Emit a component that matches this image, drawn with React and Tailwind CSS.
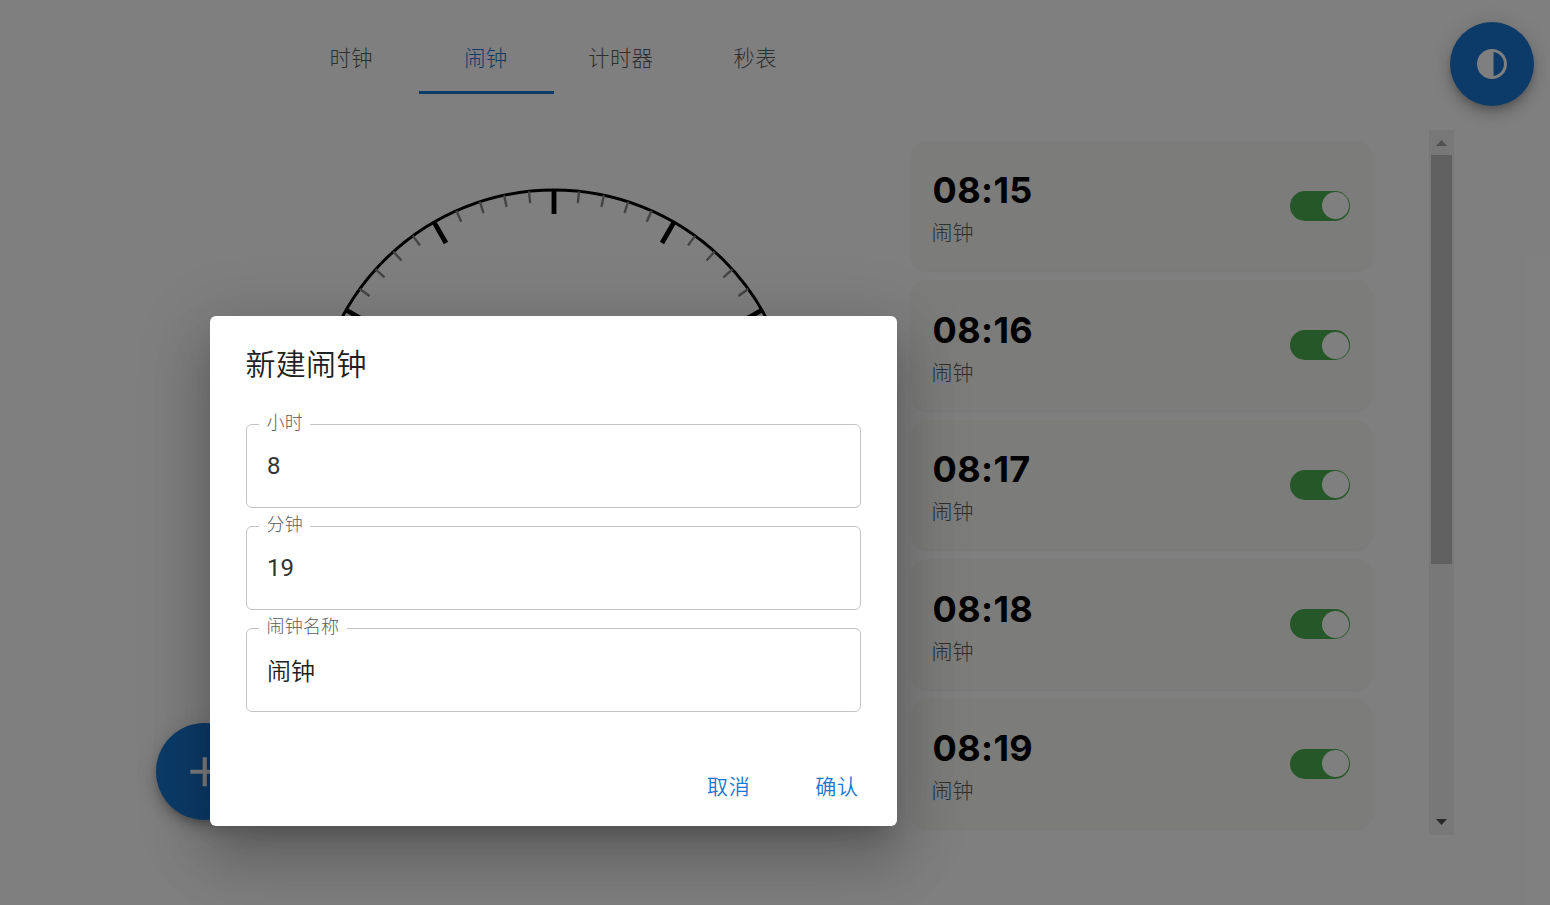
const TABS = ['时钟', '闹钟', '计时器', '秒表'];
const ALARMS = ['08:15', '08:16', '08:17', '08:18', '08:19'];

function Tabs() {
  return (
    <nav className="flex h-[94px] w-[540px] pt-[22px]">
      {TABS.map((t) => (
        <div
          key={t}
          className={
            t === '闹钟'
              ? 'flex w-[135px] items-center justify-center border-b-3 border-[#1976d2] pt-[4px] text-[21.3px] tracking-[0.4px] text-[#1976d2]'
              : 'flex w-[134.5px] items-center justify-center border-b-3 border-transparent pt-[4px] text-[21.3px] tracking-[0.4px] text-[#5c5c5c]'
          }
        >
          {t}
        </div>
      ))}
    </nav>
  );
}

function ClockFace() {
  const ticks = Array.from({ length: 60 }, (_, i) => i);
  return (
    <svg className="size-[486px]" viewBox="-243 -243 486 486">
      <circle r="240" fill="none" stroke="#000" strokeWidth="3" />
      {ticks.map((i) => (
        <line
          key={i}
          x1="0"
          x2="0"
          y1="-240"
          y2={i % 5 ? -228 : -216}
          stroke={i % 5 ? '#888' : '#000'}
          strokeWidth={i % 5 ? 2.4 : 4.8}
          transform={`rotate(${i * 6})`}
        />
      ))}
    </svg>
  );
}

function AlarmCard({ time }) {
  return (
    <div className="flex h-[129.5px] w-[463px] shrink-0 items-center justify-between rounded-[18px] bg-[#f9f9f4] pr-[23px] pl-[22px] shadow-[0_1.5px_3px_rgba(0,0,0,0.05)]">
      <div className="flex flex-col pt-[7px]">
        <span className="pl-px font-[Inter,sans-serif] text-[36px] leading-[44px] font-bold tracking-[0.4px] text-black">{time}</span>
        <span className="mt-[6px] text-[21px] leading-[31px] text-[#5c5c5c]">闹钟</span>
      </div>
      <div className="mt-px flex h-[30px] w-[60px] items-center justify-end rounded-full bg-[#4caf50] pr-px">
        <div className="size-[27px] rounded-full bg-white" />
      </div>
    </div>
  );
}

function Scrollbar() {
  return (
    <div className="flex h-[705px] w-[25px] flex-col items-center bg-[#f1f1f1]">
      <svg className="h-[25px] w-[25px] shrink-0" viewBox="0 0 25 25">
        <path d="M7 16h11l-5.5-6z" fill="#a3a3a3" />
      </svg>
      <div className="h-[409px] w-[21px] bg-[#c1c1c1]" />
      <svg className="mt-auto h-[25px] w-[25px] shrink-0" viewBox="0 0 25 25">
        <path d="M7 9h11l-5.5 6z" fill="#505050" />
      </svg>
    </div>
  );
}

const FAB_SHADOW =
  'shadow-[0_4.5px_7.5px_-1.5px_rgba(0,0,0,0.2),0_9px_15px_rgba(0,0,0,0.14),0_1.5px_27px_rgba(0,0,0,0.12)]';

function Field({ label, value, className }) {
  return (
    <fieldset className="h-[92px] w-[615px] rounded-[6px] border border-[#c4c4c4] pl-3">
      <legend className="h-[16px] px-[7.5px] text-[18px] leading-[14px] tracking-[0.2px] text-[#5c5c5c]">{label}</legend>
      <div className={`flex h-[67px] items-center pl-2 text-[24px] ${className}`}>{value}</div>
    </fieldset>
  );
}

function Dialog() {
  return (
    <div className="flex h-[510px] w-[687px] flex-col rounded-[6px] bg-white px-[36px] shadow-[0_16.5px_22.5px_-10.5px_rgba(0,0,0,0.2),0_36px_57px_4.5px_rgba(0,0,0,0.14),0_13.5px_69px_12px_rgba(0,0,0,0.12)]">
      <h2 className="-ml-[0.5px] pt-[25px] text-[30px] leading-[48px] font-[350] tracking-[0.3px] text-[#212121]">新建闹钟</h2>
      <div className="mt-[27px] flex flex-col gap-[10px]">
        <Field label="小时" value="8" className="font-normal text-[#333333]" />
        <Field label="分钟" value="19" className="font-normal text-[#333333]" />
        <Field label="闹钟名称" value="闹钟" className="pt-[4px] font-[350] text-[#212121]" />
      </div>
      <div className="mt-auto flex h-[79px] justify-end gap-[65px] pr-[2.5px] pt-[24px] text-[21px] leading-[32px] font-[350] tracking-[0.6px] text-[#1976d2]">
        <button className="h-8">取消</button>
        <button className="h-8">确认</button>
      </div>
    </div>
  );
}

export default function App() {
  return (
    <div className="relative h-[905px] w-[1550px] overflow-hidden bg-white font-[Roboto,'Noto_Sans_CJK_SC',sans-serif] font-light">
      <div className="flex h-full">
        <main className="flex h-full w-[909px] flex-col">
          <div className="pl-[284px]">
            <Tabs />
          </div>
          <div className="mt-[93px] pl-[311px]">
            <ClockFace />
          </div>
        </main>
        <aside className="flex h-[835px] w-[545px] justify-between pt-[130px]">
          <div className="flex flex-col gap-[10px] pt-[10.5px] pl-[0.5px]">
            {ALARMS.map((t) => (
              <AlarmCard key={t} time={t} />
            ))}
          </div>
          <Scrollbar />
        </aside>
      </div>
      <button className={`absolute top-[22px] left-[1450px] flex size-[84px] items-center justify-center rounded-full bg-[#1976d2] ${FAB_SHADOW}`}>
        <svg className="size-[36px]" viewBox="0 0 24 24" fill="#fff">
          <path d="M12 22c5.52 0 10-4.48 10-10S17.52 2 12 2 2 6.48 2 12s4.48 10 10 10zm1-17.93c3.94.49 7 3.85 7 7.93s-3.05 7.44-7 7.93V4.07z" />
        </svg>
      </button>
      <button className={`absolute top-[723px] left-[156px] flex size-[97px] items-center justify-center rounded-full bg-[#1976d2] ${FAB_SHADOW}`}>
        <svg className="size-[49.5px]" viewBox="0 0 24 24" fill="#fff">
          <path d="M19 13h-6v6h-2v-6H5v-2h6V5h2v6h6v2z" />
        </svg>
      </button>
      <div className="absolute inset-0 bg-black/50 pt-[316px] pl-[210px]">
        <Dialog />
      </div>
    </div>
  );
}
